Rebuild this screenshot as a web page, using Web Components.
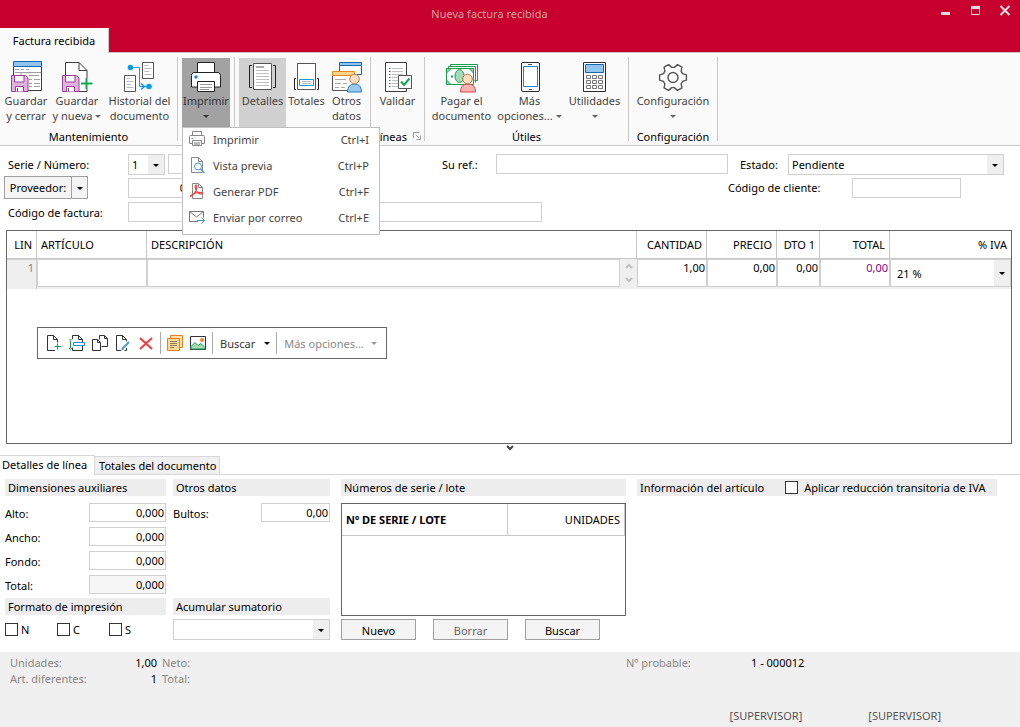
<!DOCTYPE html>
<html lang="es">
<head>
<meta charset="utf-8">
<meta name="viewport" content="width=device-width, initial-scale=1">
<title>Nueva factura recibida</title>
<style>
  html, body { margin: 0; min-height: 100%; }
  body {
    background: #fff;
    color: #000;
    font-family: "Noto Sans", "Open Sans", sans-serif;
    font-size: 11px;
    line-height: 15px;
  }
</style>
</head>
<body>
<invoice-window></invoice-window>

<script>
/* ---------- icons ---------- */
const floppy = (x) => `<g transform="translate(${x} 14)"><path d="M.5.5h14l2.500 2.500v13.500h-16.500z" fill="#e0b5dd" stroke="#9b3f9b"/><path d="M3.500.5h9.500v6.500h-9.500z" fill="#fafafa" stroke="#9b3f9b"/><path d="M4.500 16.500v-5h8v5" fill="#fafafa" stroke="#9b3f9b"/><path d="M6.500 13v3.500" stroke="#555"/></g>`;
const ICONS = {
  saveClose: [32, `<path d="M3.500 6v23.500h28v-23.500" fill="#fff" stroke="#3c3c3c"/><path d="M3.500.5h28v5h-28z" fill="#8fc5ef" stroke="#1767ad"/><path d="M5 8.500h4m2 0h3m2 0h3M5 11.500h26M11 11.500v4M19 14.500h10m-10 4h3m2 0h6m-11 4h3m2 0h6m-11 3h3m2 0h6" stroke="#a0a0a0"/>${floppy(1)}`],
  saveNew: [32, `<path d="M4.500 1.500h13.500l8 8v21h-21.500z" fill="#fff" stroke="#3c3c3c"/><path d="M18 1.500v8h8" fill="none" stroke="#3c3c3c"/>${floppy(1)}<path d="M25.500 17v11M20 22.500h11.500" stroke="#fff" stroke-width="4"/><path d="M25.500 17v11M20 22.500h11.500" stroke="#10a850" stroke-width="2"/>`],
  history: [32, `<g fill="#fff" stroke="#555"><path d="M18.500 1.500h11v16h-11zM.5 14.500h11v16h-11z"/></g><path d="M20.500 4.500h4m-4 3h7m-7 3h5m-5 3h7M2.500 17.500h4m-4 3h7m-7 3h5m-5 3h7" stroke="#bbb"/><path d="M7 6.500h8.500v19h10" fill="none" stroke="#0c9ce0"/><path d="M17 22.500l3.500 3-3.500 3" fill="none" stroke="#0c9ce0" stroke-width="1.500"/><circle cx="6.500" cy="6.500" r="2.800" fill="#0c9ce0"/><circle cx="25" cy="25.500" r="2.800" fill="#0c9ce0"/>`],
  printer: [32, `<g fill="#fff" stroke="#222"><path d="M7.500 1.500h17v10h-17z"/><path d="M1.500 14.500q0-2 2-3h25q2 1 2 3v11.500h-29z"/><path d="M7.500 20.500h17v10h-17z"/></g><path d="M10 23.500h12m-12 3h12m-12 2h9" stroke="#999"/><path d="M4.500 14.500h3v3h-3z" fill="#1b86d6"/>`],
  details: [32, `<path d="M6.500 2.500h18v26h-18z" fill="#fff" stroke="#555"/><path d="M9 6h8" stroke="#aaa" stroke-width="2"/><path d="M9 9.500h13m-13 3h13m-13 3h13m-13 3h13m-13 3h13m-13 3h13" stroke="#c0c0c0"/><path d="M5 4.500h-2.500v22h2.500M26 4.500h2.500v22h-2.500" fill="none" stroke="#222"/>`],
  totals: [32, `<path d="M6.500 2.500h18v26h-18z" fill="#fff" stroke="#555"/><path d="M8.500 18.500h14v6h-14z" fill="#fff" stroke="#159be0"/><path d="M11 20.500h9m-9 2h9" stroke="#bbb"/><path d="M5 17.500h-1.500v11h1.500M26 17.500h1.500v11h-1.500" fill="none" stroke="#222"/>`],
  otherData: [32, `<path d="M8.500 4.500v9h22v-9" fill="#fff" stroke="#1767ad"/><path d="M8.500 1.500h22v3h-22z" fill="#8fc5ef" stroke="#1767ad"/><path d="M1.500 14.500v15h22v-15" fill="#fff" stroke="#555"/><path d="M1.500 10.500h22v4h-22z" fill="#ffd58a" stroke="#e58a1f"/><path d="M4 18.500h11m-11 4h6m2 0h4m-12 4h4m2 0h4" stroke="#aaa"/><path d="M16.500 31q0-8 7-8t7 8z" fill="#9bc9ee" stroke="#2f7dc0"/><circle cx="23.500" cy="18" r="4.800" fill="#fbdcbd" stroke="#c08050"/>`],
  validate: [32, `<path d="M3.500 1.500h21v29h-21z" fill="#fff" stroke="#3c3c3c"/><path d="M10 7.500h11m-11 3h11m-11 3h11m-11 3h6m-6 3h6m-6 3h6m-6 3h6" stroke="#c0c0c0"/><path d="M7 7.500h1.500m-1.500 6h1.500m-1.500 6h1.500m-1.500 6h1.500" stroke="#109848"/><path d="M7 10.500h1.500m-1.500 6h1.500m-1.500 6h1.500" stroke="#d0103a"/><path d="M16.500 14.500h13v13h-13z" fill="#fff" stroke="#555"/><path d="M19 20.500l3 3.500 5.500-6.500" fill="none" stroke="#10a850" stroke-width="2"/>`],
  pay: [32, `<path d="M4.500 5.500v-2h27v16h-3M2.500 8v-2.500h27v16" fill="#fff" stroke="#17a050"/><path d="M.5 7.500h27v16h-27z" fill="#fff" stroke="#17a050"/><path d="M.5 7.500h4.500l-4.500 4.500zM27.500 7.500h-4.500l4.500 4.500zM.5 23.500h4.500l-4.500-4.500z" fill="#9bd3ae" stroke="#17a050"/><ellipse cx="13.500" cy="15" rx="4.500" ry="6.500" fill="#a5d8b6" stroke="#17a050"/><path d="M5 15.500h2" stroke="#17a050" stroke-width="2"/><path d="M14.500 31q0-8 7.500-8t7.500 8z" fill="#f6b5b5" stroke="#e04545"/><circle cx="21.500" cy="18" r="4.800" fill="#fbdcbd" stroke="#b87848"/>`],
  phone: [32, `<rect x="7.500" y="1.500" width="18" height="29" rx="1.500" fill="#fff" stroke="#2c2c2c"/><path d="M9.500 5.500h14v20h-14z" fill="#fff" stroke="#1b86d6"/><path d="M14 3.500h4M15 28.500h3" stroke="#555"/>`],
  calculator: [32, `<path d="M4.500 1.500h22v29h-22z" fill="#fff" stroke="#2c2c2c"/><path d="M6.500 3.500h18v8h-18z" fill="#8fc5ef" stroke="#1767ad"/><path d="M7.500 14.500h4v3h-4zm6 0h4v3h-4zm6 0h4v3h-4zM7.500 19.500h4v3h-4zm6 0h4v3h-4zm6 0h4v3h-4zM7.500 24.500h4v3h-4zm6 0h4v3h-4zm6 0h4v3h-4z" fill="#fff" stroke="#777"/>`],
  gear: [32, `<g transform="translate(16 16.500)" fill="#fff" stroke="#555" stroke-width="1.400" stroke-linejoin="round"><path d="M9.400-3.900L13.400-2.600V2.600L9.400 3.900Q8.900 5.200 8.100 6.200L8.900 10.300 4.500 12.900 1.300 10.100H-1.300L-4.500 12.900-8.900 10.300-8.100 6.200Q-8.900 5.200-9.400 3.900L-13.400 2.600V-2.600L-9.400-3.900Q-8.900-5.200-8.100-6.200L-8.900-10.300-4.500-12.900-1.300-10.100H1.300L4.500-12.900 8.900-10.300 8.100-6.200Q8.900-5.200 9.400-3.900z"/><circle r="5"/></g>`],
  /* 16 px */
  miniPrinter: [16, `<g fill="#fff" stroke="#888"><path d="M3.500.5h9v5h-9z"/><path d="M1.500 4.500h13q1 0 1 1v7h-15v-7q0-1 1-1z"/><path d="M3.500 9.500h9v5h-9z"/></g><path d="M5 11h6v3h-6z" fill="#bbb"/><path d="M2.500 7.500h1.500" stroke="#3b8fd0"/>`],
  preview: [16, `<path d="M2.500.5h7l4 4v11h-11z" fill="#fff" stroke="#888"/><path d="M9.500.5v4h4" fill="none" stroke="#888"/><circle cx="9" cy="9.500" r="3.500" fill="#fff" stroke="#4c98d0"/><path d="M11.500 12l4 4" stroke="#4c98d0" stroke-width="1.500"/>`],
  pdf: [16, `<path d="M3.500.5h6l4 4v11h-10z" fill="#fff" stroke="#888"/><path d="M9.500.5v4h4" fill="none" stroke="#888"/><path d="M1.500 13.500q4-2 6-7 1-3.500-.5-4.500-1.500.5-.5 4 1.500 4 5 5 3 0 2-1-3-1.500-8 .5-4 1.500-4 3z" fill="none" stroke="#ee4444" stroke-width="1.200"/>`],
  mail: [16, `<path d="M9 12.500h-8.500v-10h14v6" fill="#fff" stroke="#777"/><path d="M.5 2.500l7 5.500 7-5.500" fill="none" stroke="#777"/><path d="M8 11.500h7.500m-3-3l3 3-3 3" fill="none" stroke="#3b93d6"/>`],
  newDoc: [16, `<path d="M9 15.500h-7.500v-15h6l4 4v3" fill="#fff" stroke="#333"/><path d="M7.500.5v4h4" fill="none" stroke="#333"/><path d="M11.500 8.500v6M8.500 11.500h7" stroke="#17a050"/>`],
  insertDoc: [16, `<path d="M3.500 4v-3.500h6l4 4v11h-10v-3" fill="#fff" stroke="#333"/><path d="M9.500.5v4h4" fill="none" stroke="#333"/><path d="M4.500 7.500h11v3h-11z" fill="#fff" stroke="#1b86d6"/><path d="M1.500 5.500v8M0 5.500l1.500-1.500L3 5.500M0 13l1.500 1.500L3 13" fill="none" stroke="#17a050"/>`],
  copyDoc: [16, `<path d="M7.500 4.500v-4h5l3 3v8h-6" fill="#fff" stroke="#333"/><path d="M12.500.5v3h3" fill="none" stroke="#333"/><path d="M.5 4.500h5l3 3v8h-8z" fill="#fff" stroke="#333"/><path d="M5.500 4.500v3h3" fill="none" stroke="#333"/>`],
  editDoc: [16, `<path d="M6 15.500h-4.500v-15h6l4 4v2M11.500 13v2.500h-2" fill="none" stroke="#333"/><path d="M7.500.5v4h4" fill="none" stroke="#333"/><path d="M7.500 13.500l6.500-6.500" stroke="#4a98d8" stroke-width="2"/><path d="M6 15.500l1-3 2 2z" fill="#4a98d8"/>`],
  remove: [16, `<path d="M2 3l12 11M14 3L2 14" stroke="#f03c3c" stroke-width="2"/>`],
  notes: [16, `<path d="M3.500 3v-2.500h12v12h-3" fill="#ffe3ae" stroke="#ea7d1a"/><path d="M.5 3.500h12v12h-12z" fill="#ffd992" stroke="#ea7d1a"/><path d="M3 6.500h7m-7 2h7m-7 2h7m-7 2h4" stroke="#8a7a60"/>`],
  image: [16, `<path d="M.5 1.500h15v13h-15z" fill="#fff" stroke="#333"/><path d="M1 11.500l4-4 3 3 3-2 4 4v1.500h-14z" fill="#a9d8b5" stroke="#17a050"/><circle cx="12" cy="5" r="2" fill="#f08030"/>`],
  minimize: [12, `<path d="M2 7h9v3h-9z" fill="#e4dcdc"/>`],
  maximize: [12, `<path d="M2.500 3v6.500h8v-6.500" fill="none" stroke="#e4dcdc"/><path d="M2 1h9v3h-9z" fill="#e4dcdc"/>`],
  close: [12, `<path d="M1.500 1l9 9M10.500 1l-9 9" stroke="#e8e0e0" stroke-width="2"/>`],
  launcher: [8, `<path d="M.5 6v-5.500h6M3 3l3 3M7.500 3.500v4h-4" fill="none" stroke="#999"/>`],
  arrow: [6, `<path d="M0 2h6l-3 3z" fill="currentColor"/>`],
  chevron: [8, `<path d="M1 2l3 3 3-3" fill="none" stroke="currentColor" stroke-width="2"/>`],
  chevronUp: [8, `<path d="M1 6l3-3 3 3" fill="none" stroke="currentColor" stroke-width="2"/>`],
};

/* ---------- shared base ---------- */
class BaseElement extends HTMLElement {
  constructor() { super(); this.attachShadow({ mode: "open" }); }
  connectedCallback() {
    if (this.shadowRoot.childNodes.length) return;
    const t = document.createElement("template");
    t.innerHTML = `<style>*{box-sizing:border-box} :host([hidden]){display:none} button,input,select{font:inherit;color:inherit;margin:0;border-radius:0}</style>` + this.render();
    this.shadowRoot.append(t.content.cloneNode(true));
  }
  attr(name, fallback = "") { return this.getAttribute(name) ?? fallback; }
}
const define = (name, render) => customElements.define(name, class extends BaseElement { render() { return render(this); } });

define("app-icon", (el) => {
  const [size, body] = ICONS[el.attr("name")];
  return `<style>:host{display:block;flex:none;width:${size}px;height:${size}px}svg{display:block}</style>
  <svg width="${size}" height="${size}" viewBox="0 0 ${size} ${size}" aria-hidden="true" fill="none">${body}</svg>`;
});

/* ---------- form controls ---------- */
define("text-field", (el) => `
  <style>
    :host{display:flex;align-items:center}
    label{flex:none;width:var(--label-width,auto);padding-top:var(--label-top,0);white-space:nowrap}
    input{flex:1;min-width:0;width:100%;height:var(--box-height,20px);border:1px solid #d0d0d0;background:#fff;padding:0 1px 1px 3px;outline:0}
    input[readonly]{background:#f7f7f7}
    :host([numeric]) input{text-align:right}
  </style>
  ${el.attr("label") ? `<label for="c">${el.attr("label")}</label>` : ""}
  <input id="c" type="text" value="${el.attr("value")}" ${el.attr("label") ? "" : `aria-label="${el.attr("name")}"`} ${el.hasAttribute("readonly") ? "readonly" : ""}>`);

define("combo-box", (el) => `
  <style>
    :host{display:flex;align-items:center}
    label{flex:none;width:var(--label-width,auto);white-space:nowrap}
    div{flex:1;display:grid;min-width:0;height:var(--box-height,21px);grid-template-columns:1fr 16px;border:1px solid #d0d0d0;background:linear-gradient(#efefef,#efefef) right/16px 100% no-repeat #fff}
    select{grid-area:1/1/2/3;appearance:none;border:0;background:transparent;padding:0 16px 0 var(--pad,3px);outline:0;min-width:0;width:100%}
    app-icon{grid-area:1/2;place-self:center;pointer-events:none}
  </style>
  ${el.attr("label") ? `<label for="c">${el.attr("label")}</label>` : ""}
  <div><select id="c" ${el.attr("label") ? "" : `aria-label="${el.attr("name")}"`}><option>${el.attr("value")}</option></select><app-icon name="arrow"></app-icon></div>`);

define("check-field", (el) => `
  <style>
    :host{display:flex}
    label{display:flex;align-items:center;gap:var(--check-gap,3px);white-space:nowrap}
    input{appearance:none;width:13px;height:13px;border:1px solid #333;background:#fff}
    input:checked{background:#333}
  </style>
  <label><input type="checkbox"><span>${el.attr("label")}</span></label>`);

define("push-button", () => `
  <style>
    :host{display:block}
    button{width:100%;height:21px;padding:1px 0 0;border:1px solid #a0a0a0;background:#f4f4f4}
    :host([muted]) button{color:#666}
  </style>
  <button type="button"><slot></slot></button>`);

define("section-title", () => `
  <style>
    :host{display:flex;align-items:center;height:17px;padding:0 3px;background:#ededed;white-space:nowrap}
    h2{margin:0;font:inherit}
  </style>
  <h2><slot></slot></h2><slot name="extra"></slot>`);

/* ---------- title bar ---------- */
define("title-bar", () => `
  <style>
    :host{display:grid;grid-template-columns:1fr auto 1fr;height:28px;background:#c8002d;color:#d2a0a0}
    h1{grid-column:2;margin:0;font:inherit;align-self:center;padding:0 41px 2px 0}
    nav{display:flex;gap:18px;justify-content:flex-end;padding:5px 9px 0 0}
    button{width:12px;height:12px;padding:0;border:0;background:none}
  </style>
  <h1>Nueva factura recibida</h1>
  <nav>
    <button type="button" aria-label="Minimizar"><app-icon name="minimize"></app-icon></button>
    <button type="button" aria-label="Maximizar"><app-icon name="maximize"></app-icon></button>
    <button type="button" aria-label="Cerrar"><app-icon name="close"></app-icon></button>
  </nav>`);

/* ---------- ribbon ---------- */
define("ribbon-button", (el) => {
  const arrow = `<app-icon name="arrow"></app-icon>`;
  const a = el.attr("arrow");
  return `
  <style>
    :host{display:block;position:relative;width:var(--w);color:#444}
    :host([state=open]) button{background:#a2a2a2;color:#333}
    :host([state=on]) button{background:#d0d0d0}
    button{display:flex;flex-direction:column;align-items:center;width:100%;height:69px;padding:3px 0 0;border:0;background:none;white-space:nowrap}
    span{display:flex;align-items:center;justify-content:center;gap:3px;height:15px}
    span app-icon{color:#666}
    :host([state=open]) span app-icon{color:#333}
  </style>
  <button type="button"><app-icon name="${el.attr("icon")}"></app-icon>
    <span>${el.attr("text")}</span>
    <span>${el.attr("text2")}${a ? arrow : ""}</span>
  </button><slot></slot>`;
});

define("ribbon-group", (el) => `
  <style>
    :host{display:flex;flex-direction:column;padding-top:1px;height:84px;margin-top:4px;border-right:1px solid #c8c8c8}
    div{display:flex;padding:0 var(--pad,0)}
    footer{display:flex;justify-content:center;align-items:center;gap:6px;height:15px;padding-top:3px;white-space:nowrap}
  </style>
  <div><slot></slot></div>
  <footer>${el.attr("label")}${el.hasAttribute("launcher") ? `<app-icon name="launcher"></app-icon>` : ""}</footer>`);

define("drop-menu", () => `
  <style>
    :host{position:absolute;z-index:5;top:69px;left:0;width:198px;border:1px solid #c0c0c0;background:#fff;padding-bottom:2px;color:#444}
  </style>
  <slot></slot>`);

define("menu-item", (el) => `
  <style>
    :host{display:block}
    button{display:flex;align-items:center;width:100%;height:26px;border:0;background:none;padding:0 10px 4px 6px;gap:8px;text-align:left}
    kbd{margin-left:auto;font:inherit}
  </style>
  <button type="button"><app-icon name="${el.attr("icon")}"></app-icon><slot></slot><kbd>${el.attr("keys")}</kbd></button>`);

define("ribbon-bar", () => `
  <style>
    :host{display:block}
    .tabs{display:flex;background:#c8002d;height:24px}
    .tabs button{height:25px;width:109px;border:0;border-right:1px solid #c8c8c8;background:#fafafa;padding:0;z-index:1}
    .body{display:flex;height:94px;border:solid #c8c8c8;border-width:1px 0;background:#fafafa}
  </style>
  <div class="tabs"><button type="button">Factura recibida</button></div>
  <div class="body">
    <ribbon-group label="Mantenimiento">
      <ribbon-button style="--w:52px" icon="saveClose" text="Guardar" text2="y cerrar"></ribbon-button>
      <ribbon-button style="--w:50px" icon="saveNew" text="Guardar" text2="y nueva" arrow="1"></ribbon-button>
      <ribbon-button style="--w:75px" icon="history" text="Historial del" text2="documento"></ribbon-button>
    </ribbon-group>
    <ribbon-group style="--pad:4px">
      <ribbon-button style="--w:48px" state="open" icon="printer" text="Imprimir" arrow="1">
        <drop-menu>
          <menu-item icon="miniPrinter" keys="Ctrl+I">Imprimir</menu-item>
          <menu-item icon="preview" keys="Ctrl+P">Vista previa</menu-item>
          <menu-item icon="pdf" keys="Ctrl+F">Generar PDF</menu-item>
          <menu-item icon="mail" keys="Ctrl+E">Enviar por correo</menu-item>
        </drop-menu>
      </ribbon-button>
    </ribbon-group>
    <ribbon-group style="--pad:4px">
      <ribbon-button style="--w:47px" state="on" icon="details" text="Detalles"></ribbon-button>
      <ribbon-button style="--w:41px" icon="totals" text="Totales"></ribbon-button>
      <ribbon-button style="--w:39px" icon="otherData" text="Otros" text2="datos"></ribbon-button>
    </ribbon-group>
    <ribbon-group label="Líneas" launcher>
      <ribbon-button style="--w:53px" icon="validate" text="Validar"></ribbon-button>
    </ribbon-group>
    <ribbon-group label="Útiles">
      <ribbon-button style="--w:73px" icon="pay" text="Pagar el" text2="documento"></ribbon-button>
      <ribbon-button style="--w:63px" icon="phone" text="Más" text2="opciones..." arrow="1"></ribbon-button>
      <ribbon-button style="--w:67px" icon="calculator" text="Utilidades" arrow="1"></ribbon-button>
    </ribbon-group>
    <ribbon-group label="Configuración">
      <ribbon-button style="--w:88px" icon="gear" text="Configuración" arrow="1"></ribbon-button>
    </ribbon-group>
  </div>`);

/* ---------- invoice header form ---------- */
define("invoice-form", () => `
  <style>
    :host{display:block;padding:8px 16px 8px 8px}
    .row{display:flex}
    .first{height:22px;align-items:flex-start;--label-width:120px}
    .serie{width:157px}
    .numero{width:212px;margin:0 62px 0 3px}
    .ref{--label-width:54px;flex:1 1 286px;margin-right:12px}
    .estado{--label-width:48px;flex:1 1 264px}
    .second{height:23px;align-items:center;margin-left:-4px}
    .split{display:flex;width:84px;height:23px;border:1px solid #a0a0a0;background:#f4f4f4}
    .split button{border:0;background:none;padding:0;flex:1}
    .split .more{flex:none;width:16px;border-left:1px solid #a0a0a0;display:grid;place-items:center}
    .prov{width:60px;margin-left:40px}
    .cliente{--label-width:124px;width:233px;margin:0 43px 0 auto}
    .third{margin-top:3px}
    .codigo{--label-width:120px;flex:0 1 534px}
  </style>
  <div class="row first">
    <combo-box class="serie" label="Serie / Número:" value="1"></combo-box>
    <text-field class="numero" name="Número"></text-field>
    <text-field class="ref" label="Su ref.:"></text-field>
    <combo-box class="estado" label="Estado:" value="Pendiente"></combo-box>
  </div>
  <div class="row second">
    <div class="split"><button type="button">Proveedor:</button><button class="more" type="button" aria-label="Más"><app-icon name="arrow"></app-icon></button></div>
    <text-field class="prov" name="Proveedor" value="0" numeric></text-field>
    <text-field class="cliente" label="Código de cliente:"></text-field>
  </div>
  <div class="row third"><text-field class="codigo" label="Código de factura:"></text-field></div>`);

/* ---------- line grid ---------- */
define("line-toolbar", () => `
  <style>
    :host{display:inline-flex;align-items:center;height:32px;border:1px solid #666;background:#fff;padding:0 6px 0 4px}
    button{display:flex;align-items:center;gap:9px;height:23px;border:0;background:none;padding:0 3px 0 4px;white-space:nowrap;color:#333}
    button.text{padding-left:5px}
    button.muted{color:#888;gap:7px}
    button.text app-icon{color:#000}
    button.muted app-icon{color:#999}
    i{width:1px;height:22px;background:#aaa;margin:0 2px 0 3px}
  </style>
  ${["newDoc:Nueva línea", "insertDoc:Insertar línea", "copyDoc:Duplicar línea", "editDoc:Modificar línea", "remove:Borrar línea"].map((s) => { const [n, l] = s.split(":"); return `<button type="button" aria-label="${l}"><app-icon name="${n}"></app-icon></button>`; }).join("")}
  <i></i>
  <button type="button" aria-label="Notas"><app-icon name="notes"></app-icon></button>
  <button type="button" aria-label="Imagen"><app-icon name="image"></app-icon></button>
  <i></i>
  <button type="button" class="text">Buscar<app-icon name="arrow"></app-icon></button>
  <i></i>
  <button type="button" class="text muted">Más opciones...<app-icon name="arrow"></app-icon></button>`);

define("line-grid", () => `
  <style>
    :host{display:block;flex:1;min-height:214px;margin:0 8px 0 6px;border:1px solid #666}
    table{width:100%;table-layout:fixed;border-collapse:separate;border-spacing:0}
    th{height:28px;padding:0 4px;border-right:1px solid #c8c8c8;border-bottom:1px solid #c8c8c8;font-weight:400;text-align:left;white-space:nowrap}
    th:last-child{border-right:0}
    th.n{text-align:right}
    td{padding:0;height:30px;background:#efefef;vertical-align:top}
    td.lin{border-right:1px solid #d0d0d0;border-top:1px solid #d0d0d0;text-align:right;padding:0 2px 0 0;color:#888}
    input{display:block;width:100%;height:28px;border:1px solid #d0d0d0;background:#fff;padding:0 1px 11px 3px;outline:0}
    .n input{text-align:right}
    .total input{color:#8a008a}
    .desc{display:flex}
    .spin{display:flex;flex-direction:column;justify-content:space-around;align-items:center;flex:none;width:17px;height:28px;color:#c0c0c0}
    combo-box{--box-height:28px;--pad:6px}
    line-toolbar{margin:38px 0 0 30px}
  </style>
  <table>
    <colgroup><col style="width:30px"><col style="width:110px"><col><col style="width:70px"><col style="width:70px"><col style="width:43px"><col style="width:70px"><col style="width:121px"></colgroup>
    <thead><tr><th class="n">LIN</th><th>ARTÍCULO</th><th>DESCRIPCIÓN</th><th class="n">CANTIDAD</th><th class="n">PRECIO</th><th class="n">DTO 1</th><th class="n">TOTAL</th><th class="n">% IVA</th></tr></thead>
    <tbody><tr>
      <td class="lin">1</td>
      <td><input type="text" aria-label="Artículo"></td>
      <td><div class="desc"><input type="text" aria-label="Descripción"><div class="spin"><app-icon name="chevronUp"></app-icon><app-icon name="chevron"></app-icon></div></div></td>
      <td class="n"><input type="text" aria-label="Cantidad" value="1,00"></td>
      <td class="n"><input type="text" aria-label="Precio" value="0,00"></td>
      <td class="n"><input type="text" aria-label="Descuento" value="0,00"></td>
      <td class="n total"><input type="text" aria-label="Total" value="0,00"></td>
      <td><combo-box name="IVA" value="21 %"></combo-box></td>
    </tr></tbody>
  </table>
  <line-toolbar></line-toolbar>`);

/* ---------- line details ---------- */
define("serial-list", () => `
  <style>
    :host{display:block;height:113px;border:1px solid #666}
    table{width:100%;border-collapse:separate;border-spacing:0;table-layout:fixed}
    th{height:32px;padding:0 4px;border-right:1px solid #c8c8c8;border-bottom:1px solid #c8c8c8;text-align:right;font-weight:400}
    th:first-child{width:166px;text-align:left;font-weight:700}
  </style>
  <table><thead><tr><th>Nº DE SERIE / LOTE</th><th>UNIDADES</th></tr></thead></table>`);

define("detail-panel", () => `
  <style>
    :host{display:block}
    .grip{display:grid;place-items:start center;height:11px;color:#444}
    .tabs{display:flex;align-items:flex-end;height:20px;background:linear-gradient(#d8d8d8,#d8d8d8) bottom/100% 1px no-repeat}
    .tabs button{height:19px;padding:0 3px 0 4px;border:1px solid #d8d8d8;border-left:0;background:#f0f0f0;white-space:nowrap}
    .tabs .on{height:20px;padding:0 7px 3px 2px;border-bottom:0;background:#fff}
    .cols{display:grid;grid-template-columns:157px 157px 285px 1fr;column-gap:11px;padding:4px 23px 12px 5px}
    .dims section-title,.dims text-field{width:161px}
    .stack{display:flex;flex-direction:column;gap:5px;height:91px;margin:7px 0 4px;--box-height:19px;--label-width:84px;--label-top:2px}
    .misc .stack{--label-width:88px}
    .checks{display:flex;margin-top:7px}
    .checks check-field{width:52px}
    .misc combo-box{margin-top:4px}
    serial-list{margin-top:7px}
    .buttons{display:flex;gap:17px;margin-top:3px}
    .buttons push-button{width:75px}
    .info check-field{--check-gap:6px;margin-left:21px}
  </style>
  <div class="grip"><app-icon name="chevron"></app-icon></div>
  <div class="tabs"><button type="button" class="on">Detalles de línea</button><button type="button">Totales del documento</button></div>
  <div class="cols">
    <div class="dims">
      <section-title>Dimensiones auxiliares</section-title>
      <div class="stack">
        <text-field label="Alto:" value="0,000" numeric></text-field>
        <text-field label="Ancho:" value="0,000" numeric></text-field>
        <text-field label="Fondo:" value="0,000" numeric></text-field>
        <text-field label="Total:" value="0,000" numeric readonly></text-field>
      </div>
      <section-title>Formato de impresión</section-title>
      <div class="checks"><check-field label="N"></check-field><check-field label="C"></check-field><check-field label="S"></check-field></div>
    </div>
    <div class="misc">
      <section-title>Otros datos</section-title>
      <div class="stack"><text-field label="Bultos:" value="0,00" numeric></text-field></div>
      <section-title>Acumular sumatorio</section-title>
      <combo-box name="Acumular sumatorio" value=""></combo-box>
    </div>
    <div class="serial">
      <section-title>Números de serie / lote</section-title>
      <serial-list></serial-list>
      <div class="buttons"><push-button>Nuevo</push-button><push-button muted>Borrar</push-button><push-button>Buscar</push-button></div>
    </div>
    <div class="info">
      <section-title>Información del artículo<check-field slot="extra" label="Aplicar reducción transitoria de IVA"></check-field></section-title>
    </div>
  </div>`);

/* ---------- status bar ---------- */
define("status-bar", () => `
  <style>
    :host{display:block;background:#f0f0f0;padding:3px 10px 4px;color:#888}
    dl{display:grid;margin:0;grid-template-columns:80px 67px 1fr 125px 259px;grid-template-rows:16px 16px}
    dt,dd{margin:0;white-space:nowrap}
    dd{color:#000}
    dt.next{padding-left:5px}
    dd.n{text-align:right}
    footer{display:flex;justify-content:flex-end;gap:66px;padding:21px 69px 0 0;color:#555}
  </style>
  <dl>
    <dt>Unidades:</dt><dd class="n">1,00</dd><dt class="next">Neto:</dt><dt>Nº probable:</dt><dd>1 - 000012</dd>
    <dt>Art. diferentes:</dt><dd class="n">1</dd><dt class="next">Total:</dt>
  </dl>
  <footer><span>[SUPERVISOR]</span><span>[SUPERVISOR]</span></footer>`);

define("invoice-window", () => `
  <style>:host{display:flex;flex-direction:column;min-height:100vh;overflow:hidden}</style>
  <title-bar></title-bar>
  <ribbon-bar></ribbon-bar>
  <invoice-form></invoice-form>
  <line-grid></line-grid>
  <detail-panel></detail-panel>
  <status-bar></status-bar>`);
</script>
</body>
</html>
